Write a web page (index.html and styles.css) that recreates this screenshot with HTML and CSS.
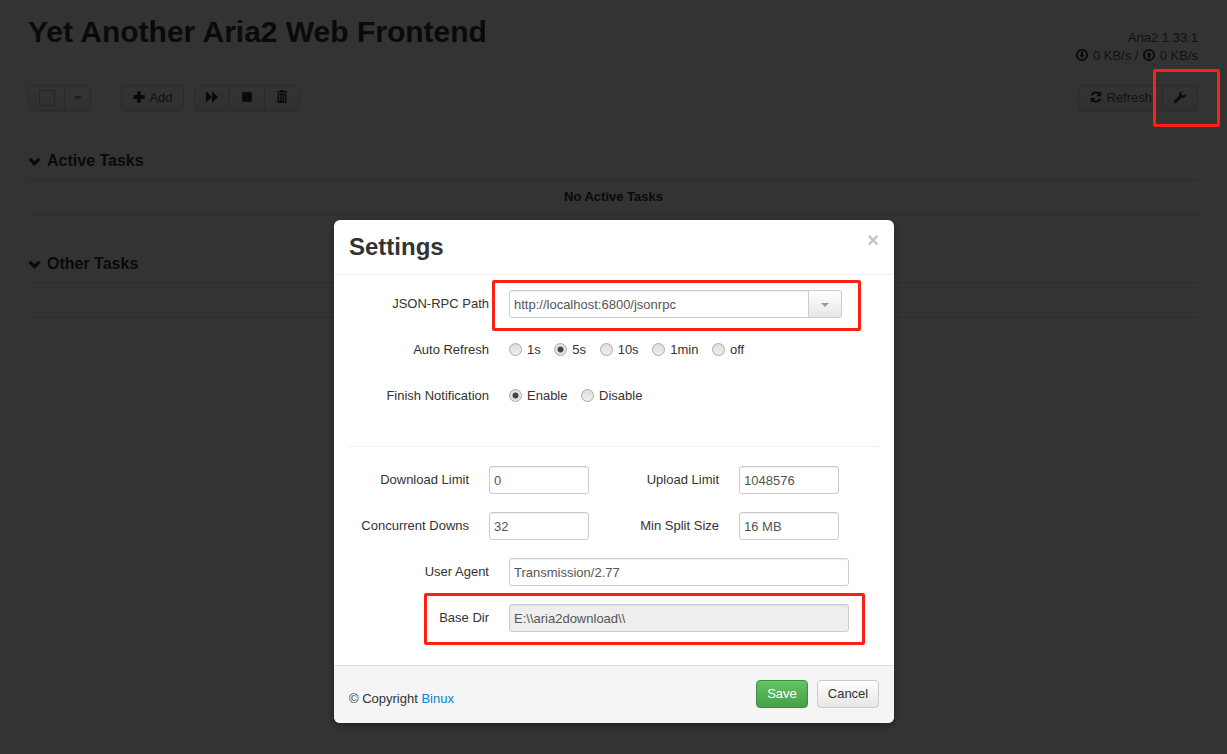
FILE: index.html
```html
<!DOCTYPE html>
<html lang="en">
<head>
    <meta charset="UTF-8">
    <title>Yet Another Aria2 Web Frontend</title>
    <link rel="stylesheet" href="styles.css">
</head>
<body>

<div class="page">
    <div class="header">
        <h1>Yet Another Aria2 Web Frontend</h1>
        <div class="status">
            <div>Aria2 1.33.1</div>
            <div class="speed">
                <svg class="icon icon-speed" viewBox="0 0 16 16"><path fill-rule="evenodd" d="M8 1a7 7 0 1 0 0 14A7 7 0 0 0 8 1zm0 2.2a4.8 4.8 0 1 1 0 9.6 4.8 4.8 0 0 1 0-9.6z"/><path d="M6.8 4.4h2.4v3.4h1.9L8 11.6 4.9 7.8h1.9z"/></svg>
                0 KB/s /
                <svg class="icon icon-speed" viewBox="0 0 16 16"><path fill-rule="evenodd" d="M8 1a7 7 0 1 0 0 14A7 7 0 0 0 8 1zm0 2.2a4.8 4.8 0 1 1 0 9.6 4.8 4.8 0 0 1 0-9.6z"/><path d="M6.8 11.6h2.4V8.2h1.9L8 4.4 4.9 8.2h1.9z"/></svg>
                0 KB/s
            </div>
        </div>
    </div>

    <div class="toolbar">
        <div class="btn-group select-group">
            <button class="btn btn-check"><span class="check-box"></span></button>
            <button class="btn btn-caret"><span class="caret"></span></button>
        </div>
        <button class="btn btn-add">
            <svg class="icon" viewBox="0 0 16 16"><path d="M5.8 1.5h4.4v4.3h4.3v4.4h-4.3v4.3H5.8v-4.3H1.5V5.8h4.3z"/></svg>
            Add
        </button>
        <div class="btn-group actions">
            <button class="btn btn-icon"><svg class="icon" viewBox="0 0 16 16"><path d="M1 1.5L8 8 1 14.5zM8 1.5L15 8l-7 6.500z"/></svg></button>
            <button class="btn btn-icon"><svg class="icon" viewBox="0 0 16 16"><path d="M2.500 2.500h11v11h-11z"/></svg></button>
            <button class="btn btn-icon"><svg class="icon icon-trash" viewBox="0 0 16 16"><path d="M6 .5h4v1.500h4v1.500H2V2h4zM3 4.500h10V15.500H3zm1.800 1.600v7.800h1V6.100zm2.700 0v7.800h1V6.100zm2.700 0v7.800h1V6.100z" fill-rule="evenodd"/></svg></button>
        </div>
        <div class="btn-group right-group">
            <button class="btn btn-refresh">
                <svg class="icon" viewBox="0 0 16 16"><path d="M14 1.200v5.800H8.200l2.200-2.200A3.900 3.900 0 0 0 4.200 6.400H1.800A6.200 6.200 0 0 1 12 3.200zM2 14.800V9h5.800l-2.200 2.200a3.900 3.900 0 0 0 6.200-1.600h2.400A6.200 6.200 0 0 1 4 12.800z"/></svg>
                Refresh
            </button>
            <button class="btn btn-wrench"><svg class="icon" viewBox="0 0 16 16"><path d="M2.600 14.800a1.500 1.500 0 0 1-1.300-2.500L7 6.700C6.400 4 8.100 1.200 11.600 1L9.300 3.500l.7 2.300 2.400.8L15 4.400c0 3.600-3 5.600-5.600 4.600L4 14.200a1.500 1.500 0 0 1-1.400.6z"/></svg></button>
        </div>
    </div>

    <div class="section">
        <h3 class="section-title">
            <svg class="chevron" viewBox="0 0 12 8"><path d="M1.500 1.500L6 6l4.500-4.500" /></svg>
            Active Tasks
        </h3>
        <div class="task-row">No Active Tasks</div>
    </div>

    <div class="section">
        <h3 class="section-title">
            <svg class="chevron" viewBox="0 0 12 8"><path d="M1.500 1.500L6 6l4.500-4.500" /></svg>
            Other Tasks
        </h3>
        <div class="task-row"></div>
    </div>
</div>

<div class="backdrop"></div>

<div class="modal">
    <div class="modal-header">
        <h3>Settings</h3>
        <span class="close">&times;</span>
    </div>
    <div class="modal-body">
        <div class="row">
            <label class="label">JSON-RPC Path</label>
            <div class="combo">
                <input class="input combo-input" type="text" value="http://localhost:6800/jsonrpc">
                <button class="combo-btn"><span class="caret"></span></button>
            </div>
        </div>
        <div class="row">
            <label class="label">Auto Refresh</label>
            <div class="radios">
                <label><input type="radio" name="refresh"> 1s</label>
                <label><input type="radio" name="refresh" checked> 5s</label>
                <label><input type="radio" name="refresh"> 10s</label>
                <label><input type="radio" name="refresh"> 1min</label>
                <label><input type="radio" name="refresh"> off</label>
            </div>
        </div>
        <div class="row">
            <label class="label">Finish Notification</label>
            <div class="radios">
                <label><input type="radio" name="notify" checked> Enable</label>
                <label><input type="radio" name="notify"> Disable</label>
            </div>
        </div>
        <hr class="divider">
        <div class="row">
            <label class="label label-short">Download Limit</label>
            <input class="input input-small" type="text" value="0">
            <label class="label label-mid">Upload Limit</label>
            <input class="input input-small" type="text" value="1048576">
        </div>
        <div class="row">
            <label class="label label-short">Concurrent Downs</label>
            <input class="input input-small" type="text" value="32">
            <label class="label label-mid">Min Split Size</label>
            <input class="input input-small" type="text" value="16 MB">
        </div>
        <div class="row">
            <label class="label">User Agent</label>
            <input class="input input-wide" type="text" value="Transmission/2.77">
        </div>
        <div class="row">
            <label class="label">Base Dir</label>
            <input class="input input-wide" type="text" value="E:\\aria2download\\" disabled>
        </div>
    </div>
    <div class="modal-footer">
        <div class="copyright">&copy; Copyright <a href="#">Binux</a></div>
        <button class="btn-modal btn-save">Save</button>
        <button class="btn-modal btn-cancel">Cancel</button>
    </div>
</div>

<div class="mark mark-wrench"></div>
<div class="mark mark-json"></div>
<div class="mark mark-dir"></div>

</body>
</html>
```

FILE: styles.css
```css
* {
    box-sizing: border-box;
}

html, body {
    height: 100%;
}

body {
    margin: 0;
    background: #fff;
    color: #333;
    font-family: "Liberation Sans", Arial, sans-serif;
    font-size: 13px;
    overflow: hidden;
}

.page {
    padding: 0 28px;
}

.header {
    display: flex;
    justify-content: space-between;
    height: 66px;
    border-bottom: 1px solid #eee;
}

.header h1 {
    margin: 0;
    padding-top: 15px;
    font-size: 30px;
    line-height: 34px;
    font-weight: bold;
    color: #333;
}

.status {
    padding: 29px 1px 0 0;
    text-align: right;
    line-height: 18px;
    color: #555;
}

.speed {
    color: #555;
}

.icon {
    width: 14px;
    height: 14px;
    fill: #333;
    vertical-align: -2px;
}

.icon-trash {
    height: 15px;
}

.toolbar {
    display: flex;
    align-items: stretch;
    height: 26px;
    margin-top: 19px;
}

.btn-group {
    display: flex;
}

.btn {
    display: block;
    height: 26px;
    padding: 0 0 2px;
    border: 1px solid #d6d6d6;
    border-left-width: 0;
    background: linear-gradient(#fff, #eee);
    color: #555;
    font-family: inherit;
    font-size: 13px;
    box-shadow: 0 1px 2px rgba(0, 0, 0, 0.1);
}

.btn-group .btn:first-child {
    border-left-width: 1px;
    border-radius: 4px 0 0 4px;
}

.btn-group .btn:last-child {
    border-radius: 0 4px 4px 0;
}

.btn-check {
    width: 37px;
    padding: 0;
}

.check-box {
    display: block;
    width: 16px;
    height: 16px;
    margin-left: 10px;
    border: 1px solid #bbb;
}

.btn-caret {
    width: 26px;
}

.caret {
    display: inline-block;
    border-top: 4px solid #999;
    border-left: 4px solid transparent;
    border-right: 4px solid transparent;
    vertical-align: middle;
}

.btn-add {
    width: 63px;
    margin-left: 30px;
    border-left-width: 1px;
    border-radius: 4px;
}

.actions {
    margin-left: 10px;
}

.btn-icon {
    width: 35px;
}

.actions .btn-icon:first-child {
    width: 36px;
}

.right-group {
    margin-left: auto;
    margin-right: 1px;
}

.btn-refresh {
    width: 85px;
}

.btn-wrench {
    width: 35px;
}

.section {
    margin-top: 32px;
}

.section + .section {
    margin-top: 31px;
}

.section-title {
    display: flex;
    align-items: center;
    gap: 6px;
    height: 37px;
    margin: 0;
    border-bottom: 1px solid #ddd;
    font-size: 16px;
    font-weight: bold;
}

.chevron {
    width: 13px;
    height: 9px;
    fill: none;
    stroke: #333;
    stroke-width: 3;
}

.task-row {
    height: 35px;
    border-bottom: 1px solid #ddd;
    font-size: 13px;
    font-weight: bold;
    line-height: 33px;
    text-align: center;
}

.backdrop {
    position: absolute;
    inset: 0;
    background: rgba(0, 0, 0, 0.8);
}

.modal {
    position: absolute;
    top: 220px;
    left: 334px;
    width: 560px;
    height: 503px;
    background: #fff;
    border-radius: 6px;
    box-shadow: 0 3px 7px rgba(0, 0, 0, 0.3);
    overflow: hidden;
}

.modal-header {
    display: flex;
    justify-content: space-between;
    height: 55px;
    padding: 0 15px;
    border-bottom: 1px solid #eee;
}

.modal-header h3 {
    margin: 0;
    padding-top: 10px;
    font-size: 24px;
    line-height: 34px;
    font-weight: bold;
}

.close {
    padding-top: 8px;
    color: #c4c4c4;
    font-size: 20px;
    font-weight: bold;
    line-height: 24px;
}

.modal-body {
    height: 390px;
    padding: 15px 15px 0;
}

.row {
    display: flex;
    align-items: center;
    height: 28px;
    margin-bottom: 18px;
}

.label {
    width: 140px;
    margin-right: 20px;
    padding-bottom: 2px;
    text-align: right;
    color: #333;
}

.label-short {
    width: 120px;
}

.label-mid {
    width: 130px;
}

.input {
    height: 28px;
    padding: 0 4px;
    border: 1px solid #ccc;
    border-radius: 3px;
    background: #fff;
    color: #555;
    font-family: inherit;
    font-size: 13px;
    box-shadow: inset 0 1px 1px rgba(0, 0, 0, 0.075);
}

.input:disabled {
    background: #eee;
    color: #555;
}

.input-small {
    width: 100px;
}

.input-wide {
    width: 340px;
}

.combo {
    display: flex;
    width: 333px;
}

.combo-input {
    flex: 1;
    border-radius: 3px 0 0 3px;
}

.combo-btn {
    width: 34px;
    height: 28px;
    padding: 0;
    border: 1px solid #ccc;
    border-radius: 0 3px 3px 0;
    background: linear-gradient(#fff, #e6e6e6);
    margin-left: -1px;
}

.radios {
    display: flex;
    gap: 13.6px;
    padding-bottom: 2px;
}

.radios label {
    display: flex;
    align-items: center;
    gap: 5px;
}

.radios input {
    appearance: none;
    width: 13px;
    height: 13px;
    margin: 0;
    border: 1px solid #aaa;
    border-radius: 50%;
    background: linear-gradient(#ddd, #eee);
}

.radios input:checked {
    background: radial-gradient(circle, #444 0, #444 2.6px, #e2e2e2 3.4px);
}

.divider {
    height: 1px;
    margin: 36px 0 19px;
    border: 0;
    background: #eee;
}

.modal-footer {
    display: flex;
    align-items: center;
    height: 58px;
    padding: 0 15px 2px;
    border-top: 1px solid #ddd;
    background: #f5f5f5;
}

.copyright {
    margin-right: auto;
    margin-top: 10px;
}

.copyright a {
    color: #0088cc;
    text-decoration: none;
}

.btn-modal {
    height: 28px;
    padding: 0;
    border: 1px solid #ccc;
    border-radius: 4px;
    font-family: inherit;
    font-size: 13px;
}

.btn-save {
    width: 52px;
    margin-right: 9px;
    border-color: #3e8e41;
    background: linear-gradient(#62c462, #46a046);
    color: #fff;
}

.btn-cancel {
    width: 62px;
    background: linear-gradient(#fff, #e6e6e6);
    color: #333;
}

.mark {
    position: absolute;
    border: 3px solid #fe2015;
    border-radius: 2px;
}

.mark-wrench {
    top: 69px;
    left: 1153px;
    width: 67px;
    height: 58px;
}

.mark-json {
    top: 280px;
    left: 492px;
    width: 369px;
    height: 51px;
}

.mark-dir {
    top: 593px;
    left: 424px;
    width: 441px;
    height: 52px;
}
```
